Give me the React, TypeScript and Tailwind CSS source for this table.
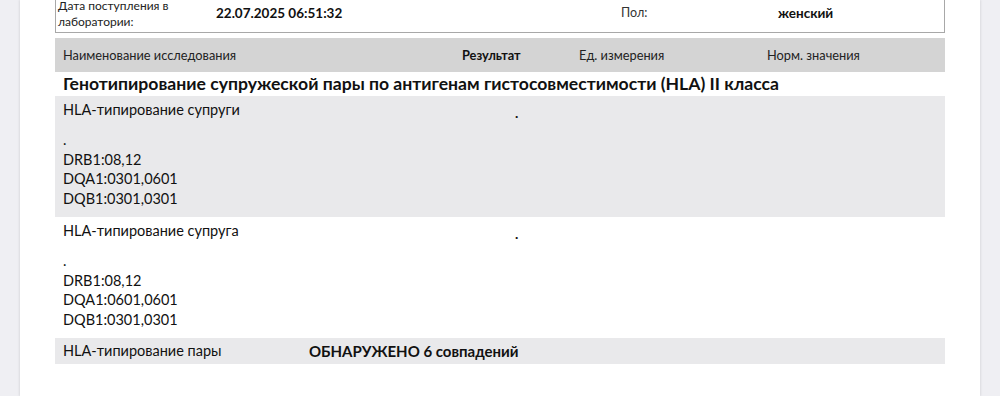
import React from 'react';

const wife = ['DRB1:08,12', 'DQA1:0301,0601', 'DQB1:0301,0301'];
const husband = ['DRB1:08,12', 'DQA1:0601,0601', 'DQB1:0301,0301'];

function TypingRow({ name, lines, shaded }: { name: string; lines: string[]; shaded: boolean }) {
  return (
    <div className={`h-[121px] ${shaded ? 'bg-[#e9e9eb]' : 'bg-white'}`}>
      <div className="grid grid-cols-[452px_1fr] h-[27px] items-center pl-2">
        <span className="text-[14.5px]">{name}</span>
        <span className="text-[14px] font-bold pt-[7px] leading-none">.</span>
      </div>
      <div className="pl-2 pt-[7px] text-[14.5px] leading-[19.5px]">
        <div>.</div>
        {lines.map((l) => (
          <div key={l}>{l}</div>
        ))}
      </div>
    </div>
  );
}

export default function App() {
  return (
    <div className="w-[1000px] h-[396px] overflow-hidden bg-[#efeff3] flex font-['Lato','Noto_Sans',sans-serif] text-[#111]">
      <div className="w-[20px] shrink-0" />
      <div className="w-[960px] shrink-0 bg-white shadow-[-1px_0_2px_rgba(0,0,0,0.08),1px_0_2px_rgba(0,0,0,0.08)] px-[35px]">
        <div className="h-[33px] border-x border-b border-[#a8a8a8] flex items-start overflow-hidden">
          <div className="w-[160px] pl-[2px] -mt-[2px] text-[12px] leading-[16px] text-[#222]">
            Дата поступления в
            <br />
            лаборатории:
          </div>
          <div className="w-[405px] pt-[3px] text-[13.5px] font-bold">22.07.2025 06:51:32</div>
          <div className="w-[157px] pt-[4px] text-[12.5px] text-[#333]">Пол:</div>
          <div className="pt-[3px] text-[13.5px] font-bold">женский</div>
        </div>

        <div className="mt-[5px] h-[34px] bg-[#d4d4d4] grid grid-cols-[407px_117px_188px_1fr] items-center text-[12.8px] text-[#222] pt-[1px]">
          <span className="pl-2">Наименование исследования</span>
          <span className="font-bold text-[#111]">Результат</span>
          <span>Ед. измерения</span>
          <span>Норм. значения</span>
        </div>

        <div className="h-[24px] flex items-center pl-2 text-[17.6px] font-bold leading-none">
          Генотипирование супружеской пары по антигенам гистосовместимости (HLA) II класса
        </div>

        <TypingRow name="HLA-типирование супруги" lines={wife} shaded />
        <TypingRow name="HLA-типирование супруга" lines={husband} shaded={false} />

        <div className="h-[26px] bg-[#e9e9eb] grid grid-cols-[246px_1fr] items-center pl-2 text-[14.5px]">
          <span>HLA-типирование пары</span>
          <span className="font-bold text-[15px]">ОБНАРУЖЕНО 6 совпадений</span>
        </div>
      </div>
      <div className="w-[20px] shrink-0" />
    </div>
  );
}
